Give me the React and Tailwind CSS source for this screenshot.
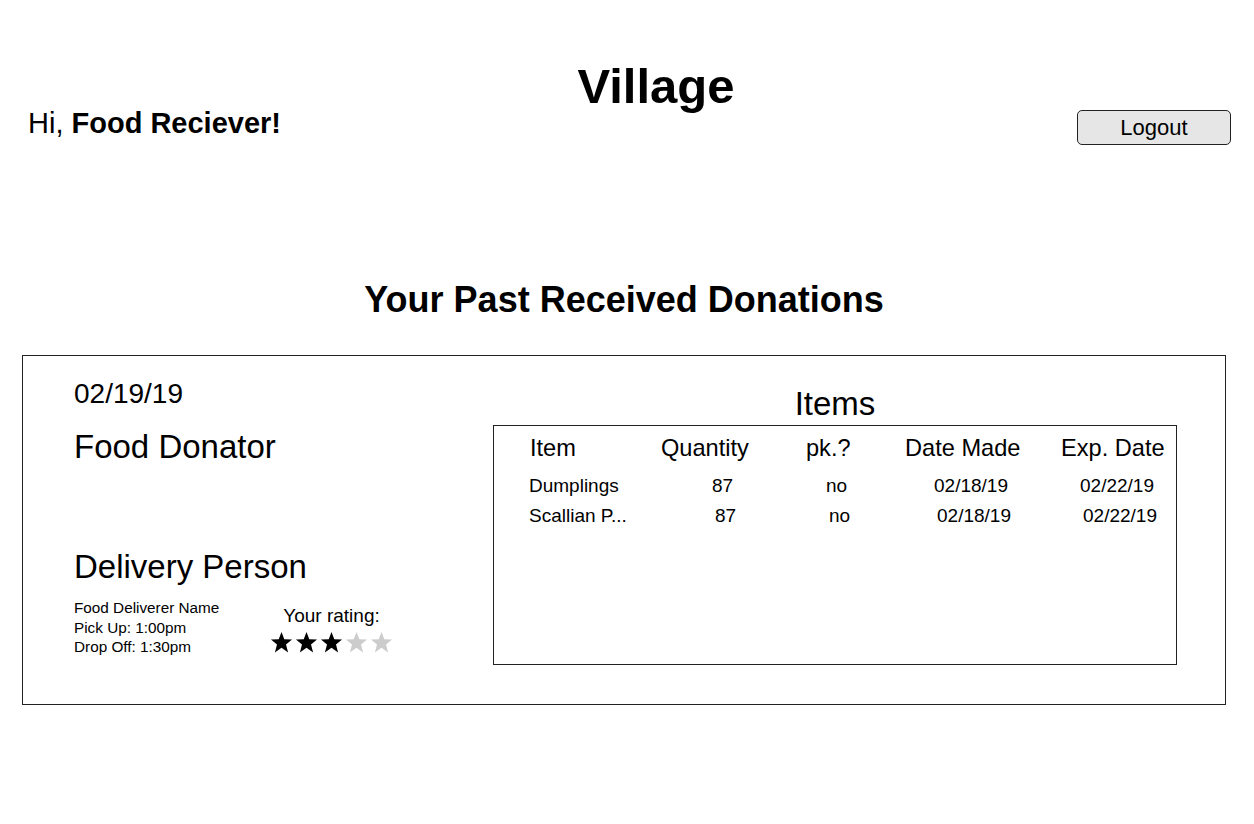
import React from "react";

const header = [
  { label: "Item", w: "w-[131px]" },
  { label: "Quantity", w: "w-[145px]" },
  { label: "pk.?", w: "w-[99px]" },
  { label: "Date Made", w: "w-[156px]" },
  { label: "Exp. Date", w: "" },
];

const rows = [
  {
    first: "w-[183px]",
    cells: ["Dumplings", "87", "no", "02/18/19", "02/22/19"],
  },
  {
    first: "w-[186px]",
    cells: ["Scallian P...", "87", "no", "02/18/19", "02/22/19"],
  },
];

function Star({ filled }) {
  return (
    <svg viewBox="0 0 24 24" className="w-[23px] h-[23px]">
      <polygon
        points="12,1 14.9,8.6 23,8.9 16.7,14 18.9,22.5 12,17.6 5.1,22.5 7.3,14 1,8.9 9.1,8.6"
        fill={filled ? "#000000" : "#cccccc"}
      />
    </svg>
  );
}

export default function App() {
  const rating = 3;

  return (
    <div className="w-full min-h-[824px] bg-white text-black font-['Liberation_Sans',Arial,sans-serif] pt-[59px]">
      {/* Header */}
      <div className="flex items-start">
        <div className="w-[400px] pl-[28px] mt-[48px] text-[29px] leading-[32px]">
          Hi, <span className="font-bold">Food Reciever!</span>
        </div>
        <h1 className="flex-1 text-center text-[49px] leading-[55px] font-bold">
          Village
        </h1>
        <div className="w-[342px] flex justify-end pr-[23px] mt-[51px]">
          <button className="w-[154px] h-[35px] border border-[#222] rounded-[5px] bg-[#e6e6e6] text-[22px] leading-none">
            Logout
          </button>
        </div>
      </div>

      <div className="pl-[22px] pr-[28px]">
        <h2 className="mt-[134px] text-center text-[36px] leading-[41px] font-bold">
          Your Past Received Donations
        </h2>

        {/* Donation card */}
        <div className="mt-[35px] h-[350px] border border-[#222] flex">
          {/* Left side */}
          <div className="w-[470px] pl-[51px] pt-[22px]">
            <div className="text-[28px] leading-[31px]">02/19/19</div>
            <div className="mt-[19px] text-[33px] leading-[37px]">
              Food Donator
            </div>
            <div className="mt-[83px] text-[33px] leading-[37px]">
              Delivery Person
            </div>
            <div className="mt-[13px] flex items-start">
              <div className="w-[196px] text-[15.3px] leading-[19.5px]">
                <div>Food Deliverer Name</div>
                <div>Pick Up: 1:00pm</div>
                <div>Drop Off: 1:30pm</div>
              </div>
              <div className="mt-[7px] w-[123px] flex flex-col items-center">
                <div className="text-[19px] leading-[21px]">Your rating:</div>
                <div className="mt-[5px] flex gap-[2px]">
                  {[1, 2, 3, 4, 5].map((n) => (
                    <Star key={n} filled={n <= rating} />
                  ))}
                </div>
              </div>
            </div>
          </div>

          {/* Items */}
          <div className="w-[684px] pt-[29px]">
            <div className="text-center text-[33px] leading-[37px]">Items</div>
            <div className="mt-[3px] h-[240px] border border-[#222]">
              <div className="flex pl-[36px] pt-[9px] text-[23.6px] leading-[26px]">
                {header.map((h) => (
                  <div key={h.label} className={h.w}>
                    {h.label}
                  </div>
                ))}
              </div>
              <div className="mt-[10px]">
                {rows.map((r, i) => (
                  <div
                    key={i}
                    className="flex pl-[35px] text-[19px] leading-[30px]"
                  >
                    <div className={r.first}>{r.cells[0]}</div>
                    <div className="w-[114px]">{r.cells[1]}</div>
                    <div className="w-[108px]">{r.cells[2]}</div>
                    <div className="w-[146px]">{r.cells[3]}</div>
                    <div>{r.cells[4]}</div>
                  </div>
                ))}
              </div>
            </div>
          </div>
        </div>
      </div>
    </div>
  );
}
